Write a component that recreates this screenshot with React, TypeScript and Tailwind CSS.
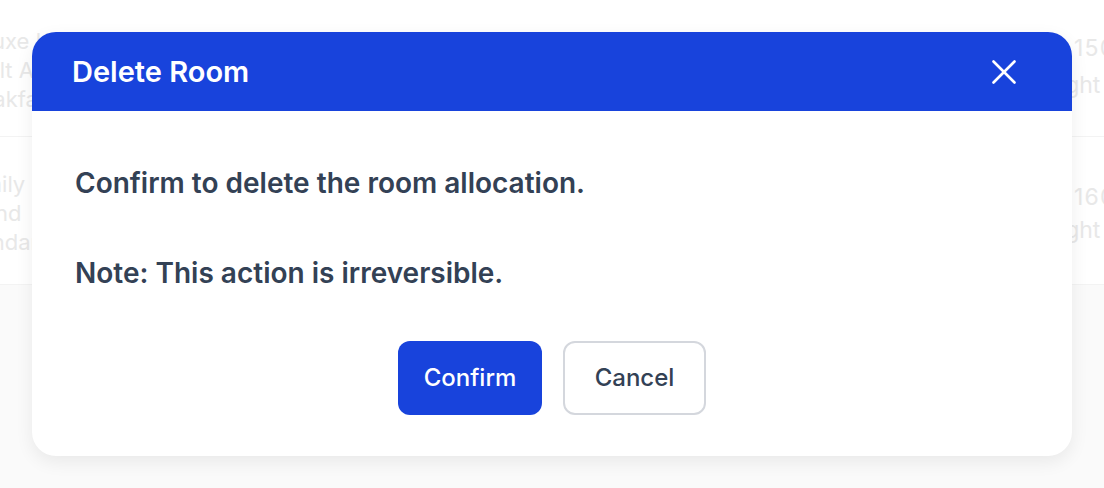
import React from 'react';

// Faint rows of the room table that sits behind the dialog
function BackgroundTable() {
  return (
    <div className="h-[488px] w-full overflow-hidden bg-[#fafafa]">
      <div className="-ml-[42px] w-[1200px] border-b border-[#f3f3f3] bg-white">
        {/* Row 1 */}
        <div className="grid h-[137px] grid-cols-[1116px_1fr] border-b border-[#f3f3f3] pt-[27px]">
          <div className="flex flex-col text-[22px] leading-[29px] text-[#e8e8e8]">
            <span>Deluxe King</span>
            <span>Adult A</span>
            <span>Breakfast</span>
          </div>
          <div className="flex flex-col pt-[3px] text-[23px] leading-[37px] text-[#e8e8e8]">
            <span className="tracking-wider">150</span>
            <span className="-ml-[28px]">night</span>
          </div>
        </div>
        {/* Row 2 */}
        <div className="grid h-[147px] grid-cols-[1116px_1fr] pt-[33px]">
          <div className="flex flex-col text-[22px] leading-[29px] text-[#e8e8e8]">
            <span>Family</span>
            <span>Grand</span>
            <span>Standard</span>
          </div>
          <div className="flex flex-col pt-[11px] text-[23px] leading-[33px] text-[#e8e8e8]">
            <span className="tracking-wider">160</span>
            <span className="-ml-[28px]">night</span>
          </div>
        </div>
      </div>
    </div>
  );
}

function CloseIcon() {
  return (
    <svg width="24" height="24" viewBox="0 0 24 24" fill="none" stroke="white" strokeWidth="2.6" strokeLinecap="round">
      <line x1="1.5" y1="1.5" x2="22.5" y2="22.5" />
      <line x1="22.5" y1="1.5" x2="1.5" y2="22.5" />
    </svg>
  );
}

export default function App() {
  return (
    <div className="relative h-[488px] w-[1104px] overflow-hidden" style={{ fontFamily: 'Inter, "Noto Sans", sans-serif' }}>
      <BackgroundTable />

      {/* Dialog overlay */}
      <div className="absolute inset-0 flex items-center justify-center p-8">
        <div className="w-full overflow-hidden rounded-3xl bg-white shadow-[0_6px_18px_rgba(0,0,0,0.07)]">
          {/* Header */}
          <div className="flex h-[79px] items-center justify-between bg-[#1843dc] pl-10 pr-[56px]">
            <h2 className="text-[29px] font-semibold leading-none text-white">Delete Room</h2>
            <button type="button" className="flex items-center justify-center">
              <CloseIcon />
            </button>
          </div>

          {/* Body */}
          <div className="px-[43px] pt-[56px] pb-[41px]">
            <p className="text-[28px] font-semibold leading-8 text-[#334155]">
              Confirm to delete the room allocation.
            </p>
            <p className="mt-[58px] text-[28px] font-semibold leading-8 text-[#334155]">
              Note: This action is irreversible.
            </p>

            <div className="mt-[52px] flex justify-center gap-[21px]">
              <button
                type="button"
                className="h-[74px] w-[144px] rounded-xl bg-[#1843dc] text-[24px] font-medium text-white"
              >
                Confirm
              </button>
              <button
                type="button"
                className="h-[74px] w-[143px] rounded-xl border-2 border-[#d4d7dd] bg-white text-[24px] font-medium text-[#334155]"
              >
                Cancel
              </button>
            </div>
          </div>
        </div>
      </div>
    </div>
  );
}
